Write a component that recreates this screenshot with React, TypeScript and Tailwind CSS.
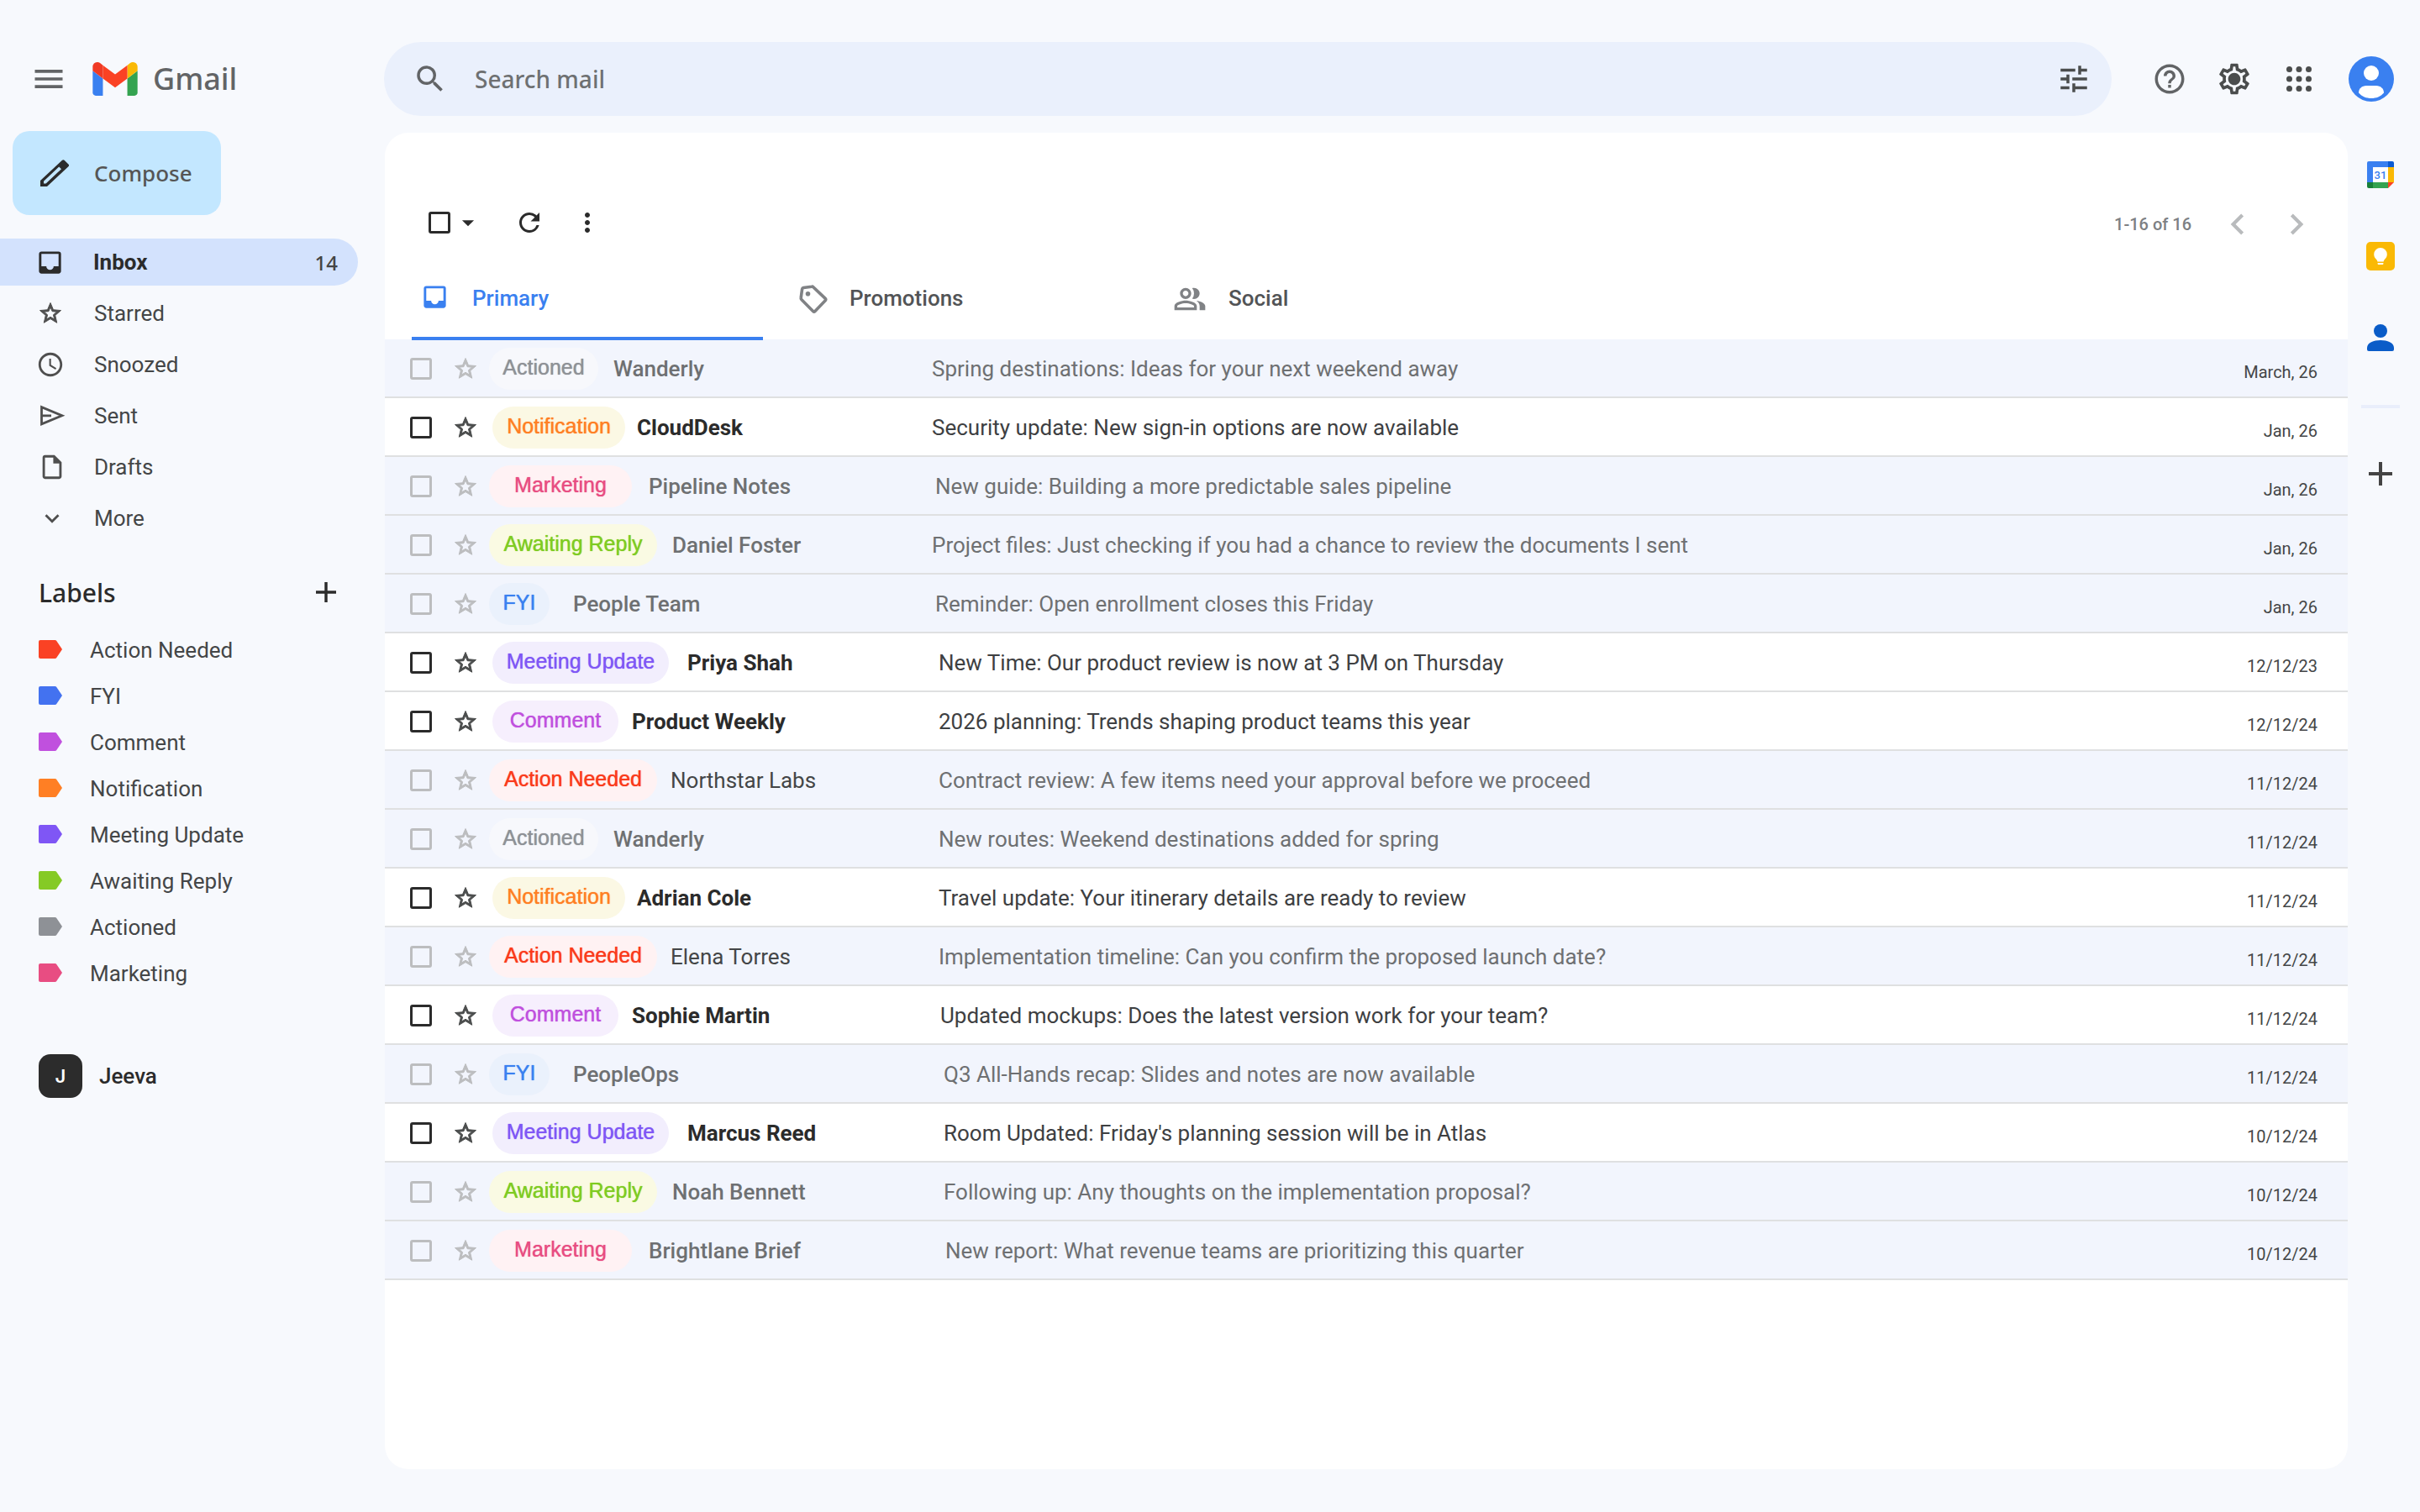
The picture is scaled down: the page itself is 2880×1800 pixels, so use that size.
import React from "react";
import {
  MdArrowDropDown,
  MdChevronLeft,
  MdChevronRight,
  MdHelpOutline,
  MdInbox,
  MdKeyboardArrowDown,
  MdMenu,
  MdMoreVert,
  MdOutlineInsertDriveFile,
  MdOutlinePeopleAlt,
  MdOutlineSettings,
  MdRefresh,
  MdSchedule,
  MdSearch,
  MdTune,
} from "react-icons/md";

type LabelName =
  | "Action Needed"
  | "FYI"
  | "Comment"
  | "Notification"
  | "Meeting Update"
  | "Awaiting Reply"
  | "Actioned"
  | "Marketing";

const labels: { name: LabelName; tag: string }[] = [
  { name: "Action Needed", tag: "text-[#fa4224]" },
  { name: "FYI", tag: "text-[#4372f0]" },
  { name: "Comment", tag: "text-[#c050de]" },
  { name: "Notification", tag: "text-[#ff7f24]" },
  { name: "Meeting Update", tag: "text-[#7f56f5]" },
  { name: "Awaiting Reply", tag: "text-[#85ca25]" },
  { name: "Actioned", tag: "text-[#8e9196]" },
  { name: "Marketing", tag: "text-[#e84d82]" },
];

const chipStyles: Record<LabelName, string> = {
  "Action Needed": "w-[200px] mr-4 bg-[#fff2f3] text-[#fa3a1c]",
  FYI: "w-[72px] mr-7 bg-[#eaf1fc] text-[#3a80f0]",
  Comment: "w-[150px] mr-4 bg-[#f6effd] text-[#c050de]",
  Notification: "w-[158px] mr-3.5 bg-[#fbf8e4] text-[#ff7f24]",
  "Meeting Update": "w-[210px] mr-[22px] bg-[#f2eefd] text-[#7f56f5]",
  "Awaiting Reply": "w-[200px] mr-[18px] bg-[#fafae3] text-[#7fcb22]",
  Actioned: "w-[130px] mr-[18px] bg-[#f7f8fc] text-[#8e9196]",
  Marketing: "w-[170px] mr-5 bg-[#fff2f4] text-[#e84d82]",
};

type Mail = {
  label: LabelName;
  sender: string;
  subject: string;
  date: string;
  unread?: boolean;
  indent: string;
};

const mails: Mail[] = [
  { label: "Actioned", sender: "Wanderly", subject: "Spring destinations: Ideas for your next weekend away", date: "March, 26", indent: "pl-0" },
  { label: "Notification", sender: "CloudDesk", subject: "Security update: New sign-in options are now available", date: "Jan, 26", unread: true, indent: "pl-0" },
  { label: "Marketing", sender: "Pipeline Notes", subject: "New guide: Building a more predictable sales pipeline", date: "Jan, 26", indent: "pl-1" },
  { label: "Awaiting Reply", sender: "Daniel Foster", subject: "Project files: Just checking if you had a chance to review the documents I sent", date: "Jan, 26", indent: "pl-0" },
  { label: "FYI", sender: "People Team", subject: "Reminder: Open enrollment closes this Friday", date: "Jan, 26", indent: "pl-1" },
  { label: "Meeting Update", sender: "Priya Shah", subject: "New Time: Our product review is now at 3 PM on Thursday", date: "12/12/23", unread: true, indent: "pl-2" },
  { label: "Comment", sender: "Product Weekly", subject: "2026 planning: Trends shaping product teams this year", date: "12/12/24", unread: true, indent: "pl-2" },
  { label: "Action Needed", sender: "Northstar Labs", subject: "Contract review: A few items need your approval before we proceed", date: "11/12/24", indent: "pl-2" },
  { label: "Actioned", sender: "Wanderly", subject: "New routes: Weekend destinations added for spring", date: "11/12/24", indent: "pl-2" },
  { label: "Notification", sender: "Adrian Cole", subject: "Travel update: Your itinerary details are ready to review", date: "11/12/24", unread: true, indent: "pl-2" },
  { label: "Action Needed", sender: "Elena Torres", subject: "Implementation timeline: Can you confirm the proposed launch date?", date: "11/12/24", indent: "pl-2" },
  { label: "Comment", sender: "Sophie Martin", subject: "Updated mockups: Does the latest version work for your team?", date: "11/12/24", unread: true, indent: "pl-2.5" },
  { label: "FYI", sender: "PeopleOps", subject: "Q3 All-Hands recap: Slides and notes are now available", date: "11/12/24", indent: "pl-3.5" },
  { label: "Meeting Update", sender: "Marcus Reed", subject: "Room Updated: Friday's planning session will be in Atlas", date: "10/12/24", unread: true, indent: "pl-3.5" },
  { label: "Awaiting Reply", sender: "Noah Bennett", subject: "Following up: Any thoughts on the implementation proposal?", date: "10/12/24", indent: "pl-3.5" },
  { label: "Marketing", sender: "Brightlane Brief", subject: "New report: What revenue teams are prioritizing this quarter", date: "10/12/24", indent: "pl-4" },
];

function GmailLogo() {
  return (
    <svg viewBox="52 42 88 66" className="h-10 w-[54px]" aria-hidden="true">
      <path fill="#3a80f0" d="M58 108h14V74L52 59v43c0 3.32 2.69 6 6 6" />
      <path fill="#34a350" d="M120 108h14c3.32 0 6-2.69 6-6V59l-20 15" />
      <path fill="#fab905" d="M120 48v26l20-15v-8c0-7.42-8.47-11.65-14.4-7.2" />
      <path fill="#fa4224" d="M72 74V48l24 18 24-18v26L96 92" />
      <path fill="#f03a24" d="M52 51v8l20 15V48l-5.6-4.2c-5.94-4.45-14.4-.22-14.4 7.2" />
    </svg>
  );
}

function PencilIcon() {
  return (
    <svg viewBox="0 0 34 32" className="h-8 w-[34px]" aria-hidden="true">
      <path
        fill="#2b2b2b"
        fillRule="evenodd"
        d="M0 32V25L26 .8a2 2 0 0 1 2.6 0L33.4 5.4a2 2 0 0 1 0 2.8L8 32ZM4 28.4H6.6L25 11.2 22.2 8.6 4 25.8Z"
      />
    </svg>
  );
}

function StarIcon() {
  return (
    <svg viewBox="0 0 24 24" className="size-[30px]" aria-hidden="true">
      <path
        fill="currentColor"
        stroke="currentColor"
        strokeWidth=".8"
        d="M22 9.24l-7.19-.62L12 2 9.19 8.63 2 9.24l5.46 4.73L5.82 21 12 17.27 18.18 21l-1.63-7.03L22 9.24zM12 15.4l-3.76 2.27 1-4.28-3.32-2.88 4.38-.38L12 6.1l1.71 4.04 4.38.38-3.32 2.88 1 4.28L12 15.4z"
      />
    </svg>
  );
}

function SendIcon() {
  return (
    <svg viewBox="0 0 30 26" className="ml-[3px] h-[26px] w-[30px]" aria-hidden="true">
      <path
        fill="none"
        stroke="#4f4f4f"
        strokeWidth="2.8"
        d="M1.5 2.6V22.9L25.8 12.7ZM1.5 12.8H13"
      />
    </svg>
  );
}

function TagIcon({ className }: { className: string }) {
  return (
    <svg viewBox="0 0 28 22" className={`h-[22px] w-7 ${className}`} aria-hidden="true">
      <path fill="currentColor" d="M2 0H19.5Q20.6 0 21.3 .9L28 11 21.3 21.1Q20.6 22 19.5 22H2Q0 22 0 20V2Q0 0 2 0Z" />
    </svg>
  );
}

function PromotionsIcon() {
  return (
    <svg viewBox="0 0 36 36" className="size-9" aria-hidden="true">
      <path
        fill="none"
        stroke="#808285"
        strokeWidth="3.6"
        strokeLinejoin="round"
        d="M4.6 6.2Q4.8 4.8 6.2 4.5L16 3.2Q17.2 3 18.1 3.9L32.2 17.4Q33.4 18.6 32.2 19.8L20 32.4Q18.8 33.6 17.6 32.4L4 18.8Q3 17.8 3.2 16.6Z"
      />
      <circle cx="11.5" cy="11.8" r="2.8" fill="#808285" />
    </svg>
  );
}

function SettingsIcon() {
  return (
    <span className="grid size-11 place-items-center">
      <MdOutlineSettings className="col-start-1 row-start-1 size-11 text-[#4b4d4d]" />
      <span className="col-start-1 row-start-1 size-3 rounded-full bg-[#4b4d4d]" />
    </span>
  );
}

function AppsIcon() {
  return (
    <svg viewBox="0 0 30 30" className="size-[30px]" fill="#4b4d4d" aria-hidden="true">
      {[3.5, 15, 26.5].map((y) =>
        [3.5, 15, 26.5].map((x) => <circle key={`${x}-${y}`} cx={x} cy={y} r="3.5" />),
      )}
    </svg>
  );
}

function AvatarIcon() {
  return (
    <svg viewBox="0 0 54 54" className="size-[54px]" aria-hidden="true">
      <circle cx="27" cy="27" r="27" fill="#3a80f0" />
      <circle cx="27" cy="20" r="9" fill="#fff" />
      <path fill="#fff" d="M12 43.5C12 38.5 16 35 21 35H33C38 35 42 38.5 42 43.5 38 48 33 50 27 50 21 50 16 48 12 43.5Z" />
    </svg>
  );
}

function CalendarIcon() {
  return (
    <svg viewBox="0 0 32 32" className="size-8" aria-hidden="true">
      <path fill="#3a80f0" d="M2 0H25V7H7V25H0V2Q0 0 2 0Z" />
      <path fill="#0b5bd3" d="M25 0H30Q32 0 32 2V7H25Z" />
      <path fill="#fab905" d="M25 7H32V25H25Z" />
      <path fill="#34a350" d="M7 25H25V32H7Z" />
      <path fill="#188038" d="M0 25H7V32H2Q0 32 0 30Z" />
      <path fill="#fa4224" d="M25 25H32L25 32Z" />
      <path fill="#fff" d="M7 7H25V25H7Z" />
      <text x="16" y="21" textAnchor="middle" fontSize="13" fontWeight="500" fill="#3a80f0" className="font-['Roboto',sans-serif]">
        31
      </text>
    </svg>
  );
}

function KeepIcon() {
  return (
    <svg viewBox="0 0 34 34" className="size-[34px]" aria-hidden="true">
      <rect width="34" height="34" rx="5" fill="#fab905" />
      <path fill="#fff" d="M17 7A7.8 7.8 0 0 1 24.8 14.8C24.8 18 23 19.8 21.6 21.2Q20.8 22.2 20.6 23.6H13.4Q13.2 22.2 12.4 21.2C11 19.8 9.2 18 9.2 14.8A7.8 7.8 0 0 1 17 7ZM13.6 25H20.4V26Q20.4 27 19.4 27H14.6Q13.6 27 13.6 26Z" />
    </svg>
  );
}

function ContactsIcon() {
  return (
    <svg viewBox="0 0 32 32" className="size-8" fill="#0a5cc8" aria-hidden="true">
      <circle cx="16" cy="8" r="8" />
      <path d="M0 28C0 22 8 19 16 19 24 19 32 22 32 28V30Q32 32 30 32H2Q0 32 0 30Z" />
    </svg>
  );
}

function PlusIcon({ className }: { className: string }) {
  return (
    <svg viewBox="0 0 28 28" className={className} aria-hidden="true">
      <path stroke="currentColor" strokeWidth="4" d="M14 0V28M0 14H28" />
    </svg>
  );
}

const navItems: { name: string; icon: React.ReactNode }[] = [
  { name: "Starred", icon: <StarIcon /> },
  { name: "Snoozed", icon: <MdSchedule className="-ml-0.5 size-[34px]" /> },
  { name: "Sent", icon: <SendIcon /> },
  { name: "Drafts", icon: <MdOutlineInsertDriveFile className="size-[34px]" /> },
  { name: "More", icon: <MdKeyboardArrowDown className="size-[34px]" /> },
];

function Header() {
  return (
    <header className="flex items-center pt-[50px]">
      <div className="flex w-[457px] shrink-0 items-center">
        <button type="button" aria-label="Main menu" className="ml-9">
          <MdMenu className="size-11 text-[#626466]" />
        </button>
        <a href="#inbox" className="ml-[30px] flex items-center gap-[18px]">
          <GmailLogo />
          <span className="font-['Noto_Sans',sans-serif] text-[36px] leading-10 font-medium text-[#626466]">Gmail</span>
        </a>
      </div>
      <form role="search" className="flex h-[88px] flex-1 items-center rounded-full bg-[#eaf0fc] pr-6 pl-[34px]">
        <button type="button" aria-label="Search">
          <MdSearch className="size-[42px] text-[#626466]" />
        </button>
        <input
          type="text"
          aria-label="Search mail"
          placeholder="Search mail"
          className="ml-8 min-w-0 flex-1 bg-transparent font-['Noto_Sans',sans-serif] text-[28px] font-medium text-[#444] outline-none placeholder:text-[#6e7072]"
        />
        <button type="button" aria-label="Search options">
          <MdTune className="size-[42px] text-[#4b4d4d]" />
        </button>
      </form>
      <div className="flex w-[367px] shrink-0 items-center pl-12">
        <button type="button" aria-label="Help">
          <MdHelpOutline className="size-[42px] text-[#626466]" />
        </button>
        <button type="button" aria-label="Settings" className="ml-[34px]">
          <SettingsIcon />
        </button>
        <button type="button" aria-label="Apps" className="ml-10">
          <AppsIcon />
        </button>
        <button type="button" aria-label="Account" className="ml-11">
          <AvatarIcon />
        </button>
      </div>
    </header>
  );
}

function Sidebar() {
  return (
    <aside className="w-[458px] shrink-0 pt-[18px] font-['Roboto',sans-serif] text-[26px] text-[#444647]">
      <button
        type="button"
        className="ml-[15px] flex h-[100px] w-[248px] items-center rounded-[20px] bg-[#c3e7ff] pl-[33px] font-['Noto_Sans',sans-serif] font-medium text-[#555]"
      >
        <PencilIcon />
        <span className="ml-[30px]">Compose</span>
      </button>
      <nav aria-label="Mailboxes" className="mt-7 flex flex-col gap-[5px]">
        <a
          href="#inbox"
          aria-current="page"
          className="flex h-14 w-[426px] items-center rounded-r-full bg-[#d3e2fd] pr-6 pl-[42px] text-[#2b2b2b]"
        >
          <MdInbox className="size-[35px]" />
          <span className="ml-[34px] flex-1 font-bold">Inbox</span>
          <span className="pt-0.5 font-['Noto_Sans',sans-serif] text-[24px] font-medium text-[#444]">14</span>
        </a>
        {navItems.map((item) => (
          <a key={item.name} href={`#${item.name.toLowerCase()}`} className="flex h-14 w-[426px] items-center pl-[45px]">
            <span className="flex w-[67px] items-center text-[#4f4f4f]">{item.icon}</span>
            {item.name}
          </a>
        ))}
      </nav>
      <div className="mt-8 flex h-14 w-[426px] items-center justify-between pr-[26px] pl-[46px]">
        <h2 className="font-['Noto_Sans',sans-serif] text-[30px] font-medium text-[#2b2b2b]">Labels</h2>
        <button type="button" aria-label="Create label">
          <PlusIcon className="size-6 text-[#2b2b2b]" />
        </button>
      </div>
      <ul className="mt-3">
        {labels.map((label) => (
          <li key={label.name}>
            <a href={`#${label.name.toLowerCase().replace(" ", "-")}`} className="flex h-[55px] items-center pl-[46px]">
              <TagIcon className={label.tag} />
              <span className="ml-[33px] pt-1">{label.name}</span>
            </a>
          </li>
        ))}
      </ul>
      <button type="button" className="mt-[70px] ml-[46px] flex items-center font-medium text-[#2b2b2b]">
        <span className="flex size-[52px] items-center justify-center rounded-[14px] bg-[#2c2c2c] font-['Inter',sans-serif] text-[22px] font-semibold text-white">
          J
        </span>
        <span className="ml-5">Jeeva</span>
      </button>
    </aside>
  );
}

function Toolbar() {
  return (
    <div className="flex h-[50px] items-center justify-between pr-9 pl-[52px] font-['Roboto',sans-serif]">
      <div className="flex items-center text-[#2b2b2b]">
        <input
          type="checkbox"
          aria-label="Select all"
          className="size-[26px] appearance-none rounded-[3px] border-3 border-[#2b2b2b]"
        />
        <button type="button" aria-label="Select options" className="ml-1">
          <MdArrowDropDown className="size-[34px]" />
        </button>
        <button type="button" aria-label="Refresh" className="ml-[38px]">
          <MdRefresh className="size-9" />
        </button>
        <button type="button" aria-label="More options" className="ml-[33px]">
          <MdMoreVert className="size-9" />
        </button>
      </div>
      <div className="flex items-center pt-1 text-[#7d8083]">
        <span className="text-[20px] font-medium">1-16 of 16</span>
        <button type="button" aria-label="Newer" className="ml-[30px] text-[#b9bbbd]">
          <MdChevronLeft className="size-[50px]" />
        </button>
        <button type="button" aria-label="Older" className="ml-5 text-[#b9bbbd]">
          <MdChevronRight className="size-[50px]" />
        </button>
      </div>
    </div>
  );
}

function Tabs() {
  return (
    <div role="tablist" className="relative z-10 mt-4 -mb-px flex h-[99px] pl-8 font-['Roboto',sans-serif] text-[26px] font-medium text-[#525456]">
      <button
        type="button"
        role="tab"
        aria-selected="true"
        className="mr-7 flex w-[418px] items-center border-b-4 border-[#3a80f0] pl-2.5 text-[#3a80f0]"
      >
        <MdInbox className="size-[35px]" />
        <span className="ml-[27px] pt-1">Primary</span>
      </button>
      <button type="button" role="tab" aria-selected="false" className="mr-7 flex w-[418px] items-center pl-3.5">
        <PromotionsIcon />
        <span className="ml-[25px]">Promotions</span>
      </button>
      <button type="button" role="tab" aria-selected="false" className="flex w-[418px] items-center pl-3.5">
        <MdOutlinePeopleAlt className="size-10 text-[#808285]" />
        <span className="ml-[26px]">Social</span>
      </button>
    </div>
  );
}

function MailRow({ mail }: { mail: Mail }) {
  const unread = Boolean(mail.unread);
  const senderStyle = unread
    ? "font-bold text-[#2b2b2b]"
    : mail.label === "Action Needed"
      ? "text-[#444647]"
      : "font-medium text-[#6e7072]";
  return (
    <tr className={unread ? "bg-white" : "bg-[#f2f5fd]"}>
      <td className="h-[70px] border-b-2 border-[#dfe0e1] pt-0.5 pl-[30px]">
        <input
          type="checkbox"
          aria-label={`Select message from ${mail.sender}`}
          className={`block size-[26px] appearance-none rounded-[3px] border-3 ${unread ? "border-[#2b2b2b]" : "border-[#bcbdbf]"}`}
        />
      </td>
      <td className="border-b-2 border-[#dfe0e1] pt-0.5">
        <button
          type="button"
          aria-label={`Star message from ${mail.sender}`}
          className={`block ${unread ? "text-[#4b4d4d]" : "text-[#bcbdbf]"}`}
        >
          <StarIcon />
        </button>
      </td>
      <td className="border-b-2 border-[#dfe0e1]">
        <div className={`flex items-center pt-0.5 whitespace-nowrap ${unread ? "pl-1" : ""}`}>
          <span
            className={`flex h-[50px] shrink-0 items-center justify-center rounded-full pb-0.5 font-['Liberation_Sans',sans-serif] text-[25px] [text-shadow:0_0_1px_currentColor] ${chipStyles[mail.label]}`}
          >
            {mail.label}
          </span>
          <span className={senderStyle}>{mail.sender}</span>
        </div>
      </td>
      <td className="border-b-2 border-[#dfe0e1]">
        <a
          href="#message"
          className={`block truncate pt-0.5 ${mail.indent} ${unread ? "text-[#3e4042]" : "text-[#6e7072]"}`}
        >
          {mail.subject}
        </a>
      </td>
      <td className="border-b-2 border-[#dfe0e1] pt-2.5 pr-9 text-right text-[20px] text-[#444647]">{mail.date}</td>
    </tr>
  );
}

function MailList() {
  return (
    <table className="w-full table-fixed border-separate border-spacing-0 font-['Roboto',sans-serif] text-[26px]">
      <colgroup>
        <col className="w-[81px]" />
        <col className="w-[43px]" />
        <col className="w-[527px]" />
        <col />
        <col className="w-[200px]" />
      </colgroup>
      <tbody>
        {mails.map((mail) => (
          <MailRow key={mail.subject} mail={mail} />
        ))}
      </tbody>
    </table>
  );
}

function SideRail() {
  return (
    <aside aria-label="Companion apps" className="flex w-[86px] shrink-0 flex-col items-center gap-16 pt-[54px] pr-2">
      <button type="button" aria-label="Calendar">
        <CalendarIcon />
      </button>
      <button type="button" aria-label="Keep">
        <KeepIcon />
      </button>
      <button type="button" aria-label="Contacts">
        <ContactsIcon />
      </button>
      <hr className="h-1 w-[46px] border-0 bg-[#e9eefb]" />
      <button type="button" aria-label="Get add-ons">
        <PlusIcon className="size-7 text-[#444]" />
      </button>
    </aside>
  );
}

export default function App() {
  return (
    <div className="flex min-h-screen flex-col bg-[#f7f9fd]">
      <Header />
      <div className="flex flex-1">
        <Sidebar />
        <main className="mt-5 mb-[51px] min-w-0 flex-1 rounded-[28px] bg-white pt-[82px]">
          <Toolbar />
          <Tabs />
          <MailList />
        </main>
        <SideRail />
      </div>
    </div>
  );
}
